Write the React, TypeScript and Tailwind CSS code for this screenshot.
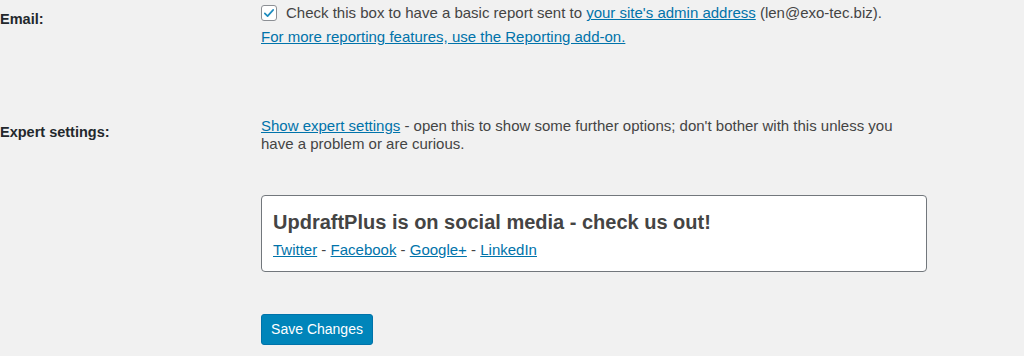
export default function App() {
  return (
    <div className="w-[1024px] h-[356px] overflow-hidden bg-[#f1f1f1] text-[15px] text-[#444] font-['Liberation_Sans',Arial,sans-serif]">
      {/* Email row */}
      <div className="flex h-[117px]">
        <div className="w-[261px] pt-[9px] leading-[20px] text-[14.5px] font-bold text-[#23282d]">Email:</div>
        <div className="flex flex-col">
          <div className="flex items-center h-[27px]">
            <span className="mt-[-1px] w-[16px] h-[16px] border border-[#8c8f94] rounded-[3px] bg-white flex items-center justify-center">
              <svg width="14" height="14" viewBox="0 0 20 20">
                <path d="M4 10.5l4 4 8-9" fill="none" stroke="#1e8cbe" strokeWidth="2.4" strokeLinecap="round" strokeLinejoin="round" />
              </svg>
            </span>
            <span className="ml-[9px]">
              Check this box to have a basic report sent to{' '}
              <a className="text-[#0073aa] underline" href="#">your site's admin address</a> (len@exo-tec.biz).
            </span>
          </div>
          <a className="leading-[20px] text-[#0073aa] underline" href="#">
            For more reporting features, use the Reporting add-on.
          </a>
        </div>
      </div>

      {/* Expert settings row */}
      <div className="flex h-[78px]">
        <div className="w-[261px] pt-[5px] leading-[20px] text-[14.5px] font-bold text-[#23282d]">Expert settings:</div>
        <div className="w-[660px] leading-[18px]">
          <a className="text-[#0073aa] underline" href="#">Show expert settings</a> - open this to show some further options; don't bother with this unless you have a problem or are curious.
        </div>
      </div>

      {/* Social box */}
      <div className="ml-[261px] w-[666px] h-[77px] bg-white border border-[#72777c] rounded-[4px] px-[11px] pt-[14px]">
        <h2 className="text-[20px] leading-[24px] font-bold text-[#444]">UpdraftPlus is on social media - check us out!</h2>
        <div className="mt-[7px] leading-[18px]">
          <a className="text-[#0073aa] underline" href="#">Twitter</a> -{' '}
          <a className="text-[#0073aa] underline" href="#">Facebook</a> -{' '}
          <a className="text-[#0073aa] underline" href="#">Google+</a> -{' '}
          <a className="text-[#0073aa] underline" href="#">LinkedIn</a>
        </div>
      </div>

      {/* Submit */}
      <div className="ml-[261px] mt-[42px]">
        <button className="w-[112px] h-[31px] rounded-[3px] bg-[#0085ba] border border-[#0073aa] text-white text-[14px] leading-[29px]">
          Save Changes
        </button>
      </div>
    </div>
  );
}
